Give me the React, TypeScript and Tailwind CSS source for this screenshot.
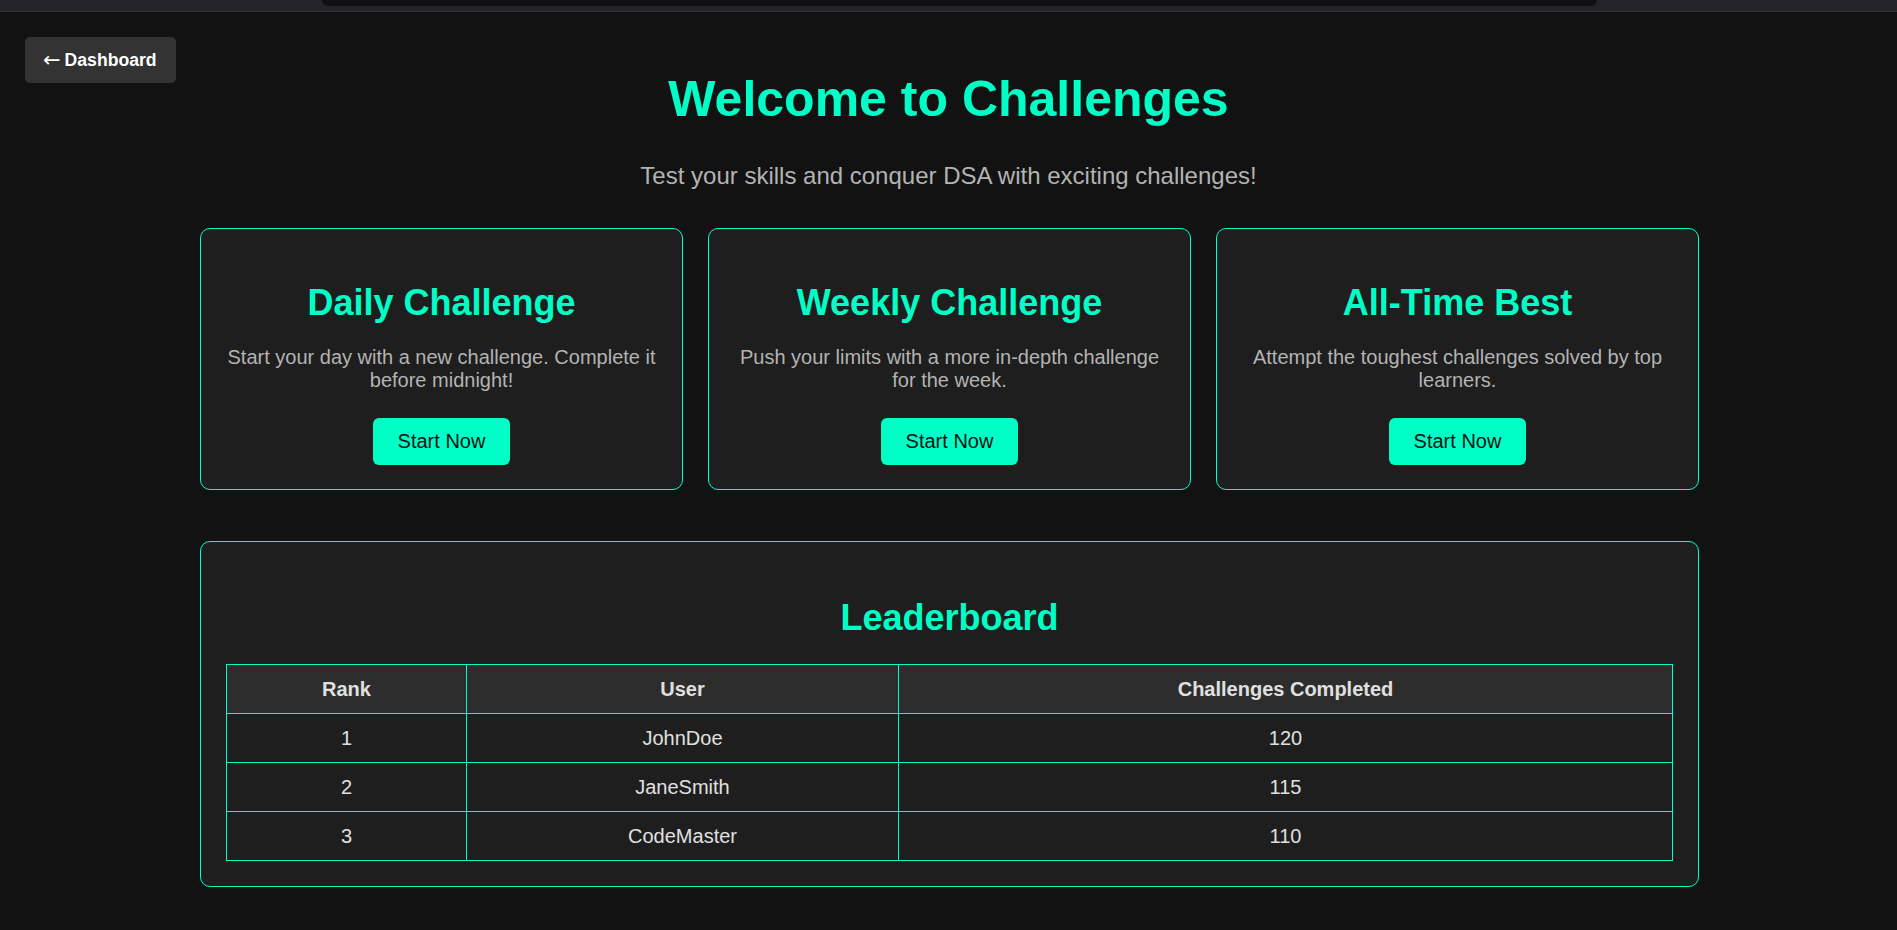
import React from 'react';

type Challenge = {
  title: string;
  description: string;
};

type Leader = {
  rank: number;
  user: string;
  completed: number;
};

const CHALLENGES: Challenge[] = [
  {
    title: 'Daily Challenge',
    description: 'Start your day with a new challenge. Complete it before midnight!'
  },
  {
    title: 'Weekly Challenge',
    description: 'Push your limits with a more in-depth challenge for the week.'
  },
  {
    title: 'All-Time Best',
    description: 'Attempt the toughest challenges solved by top learners.'
  }
];

const LEADERS: Leader[] = [
  { rank: 1, user: 'JohnDoe', completed: 120 },
  { rank: 2, user: 'JaneSmith', completed: 115 },
  { rank: 3, user: 'CodeMaster', completed: 110 }
];

export default function App() {
  return (
    <div className="min-h-screen bg-[#121212] font-['Liberation_Sans',Arial,sans-serif]">
      {/* browser strip at the very top */}
      <div className="h-[12px] bg-[#232329] border-b border-[#36363c]">
        <div className="ml-[322px] w-[1275px] h-[6px] bg-[#111114] rounded-b-[6px]" />
      </div>

      <div className="relative pb-10">
        <button className="absolute left-[25px] top-[25px] h-[46px] pl-[18px] pr-[19px] flex items-center rounded-[5px] bg-[#333333] text-white text-[17.6px] font-bold">
          <span className="font-['DejaVu_Sans',sans-serif] font-normal text-[21px] leading-none mr-[4px]">←</span>
          Dashboard
        </button>

        <h1 className="pt-[59px] text-center text-[50px] leading-[57.5px] font-bold text-[#00ffc6]">
          Welcome to Challenges
        </h1>
        <p className="mt-[33px] text-center text-[24px] leading-[27.6px] text-[#b3b3b3]">
          Test your skills and conquer DSA with exciting challenges!
        </p>

        <div className="w-[1499px] ml-[200px]">
          {/* challenge cards */}
          <div className="mt-[39px] grid grid-cols-3 gap-[25px]">
            {CHALLENGES.map(c => (
              <div
                key={c.title}
                className="flex flex-col items-center px-6 pb-6 pt-[53px] rounded-[10px] border border-[#00ffc6] bg-[#1e1e1e] text-center"
              >
                <h2 className="text-[36px] leading-[41.4px] font-bold text-[#00ffc6]">{c.title}</h2>
                <p className="mt-[22px] text-[20px] leading-[23px] text-[#b3b3b3]">{c.description}</p>
                <button className="mt-[26px] h-[47px] px-[25px] rounded-[6px] bg-[#00ffc6] text-[#111] text-[20px] leading-[23px]">
                  Start Now
                </button>
              </div>
            ))}
          </div>

          {/* leaderboard */}
          <div className="mt-[51px] px-[25px] pb-[25px] pt-[55px] rounded-[10px] border border-[#00ffc6] bg-[#1e1e1e]">
            <h2 className="text-center text-[36px] leading-[41.4px] font-bold text-[#00ffc6]">Leaderboard</h2>
            <table className="mt-[26px] w-full table-fixed border-collapse text-[20px] text-[#e0e0e0]">
              <colgroup>
                <col className="w-[240px]" />
                <col className="w-[432px]" />
                <col />
              </colgroup>
              <thead>
                <tr className="bg-[#2d2d2d]">
                  <th className="border border-[#00ffc6] py-3 leading-6 font-bold">Rank</th>
                  <th className="border border-[#00ffc6] py-3 leading-6 font-bold">User</th>
                  <th className="border border-[#00ffc6] py-3 leading-6 font-bold">Challenges Completed</th>
                </tr>
              </thead>
              <tbody>
                {LEADERS.map(l => (
                  <tr key={l.rank}>
                    <td className="border border-[#00ffc6] py-3 leading-6 text-center">{l.rank}</td>
                    <td className="border border-[#00ffc6] py-3 leading-6 text-center">{l.user}</td>
                    <td className="border border-[#00ffc6] py-3 leading-6 text-center">{l.completed}</td>
                  </tr>
                ))}
              </tbody>
            </table>
          </div>
        </div>
      </div>
    </div>
  );
}
